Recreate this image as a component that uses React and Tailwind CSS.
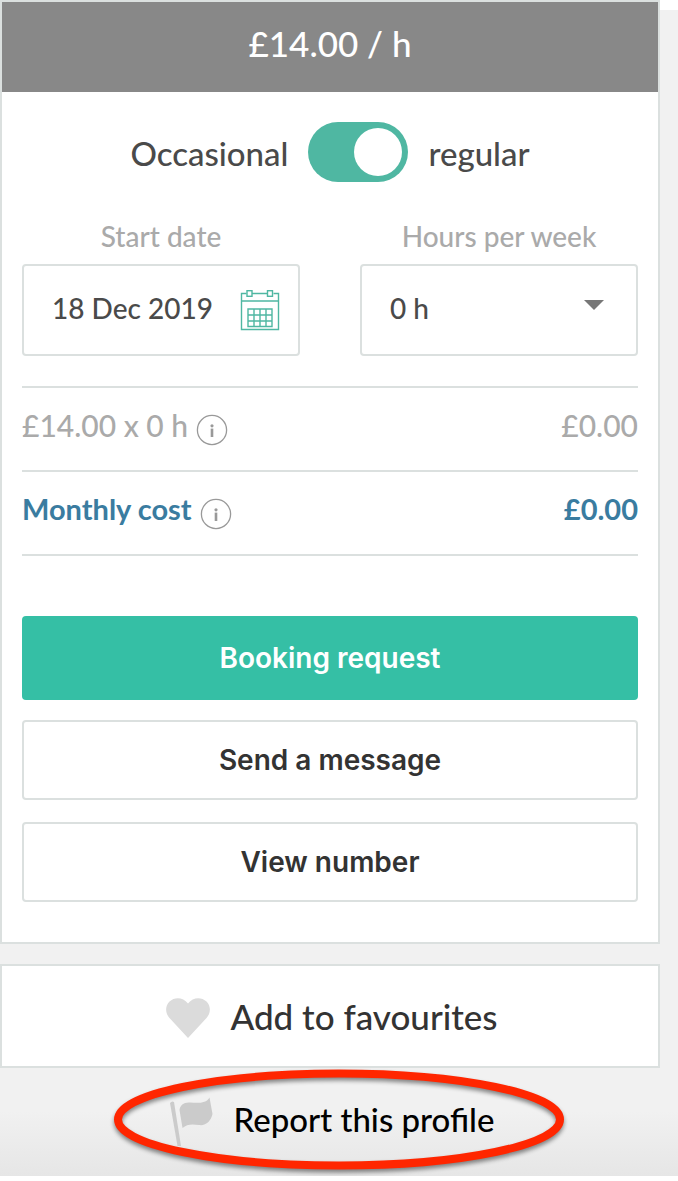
import React, { useState } from 'react';

const InfoIcon = () => (
    <svg viewBox="0 0 32 32" className="w-8 h-8" fill="none" aria-hidden="true">
        <circle cx="16" cy="16" r="14.6" stroke="#999999" strokeWidth="1.3" />
        <circle cx="16" cy="11.8" r="1.6" fill="#999999" />
        <rect x="14.7" y="14.6" width="2.6" height="8.4" fill="#999999" />
    </svg>
);

const CalendarIcon = () => (
    <svg viewBox="0 0 40 42" className="w-10 h-[42px]" fill="none" stroke="#4fb7a2" strokeWidth="1.4" aria-hidden="true">
        <path d="M6.5 4.5H1.5V40.5H38.5V4.5H33.5M12 4.5H27.5M1.5 12H38.5" />
        <rect x="7" y="1.7" width="5" height="5.6" />
        <rect x="27.5" y="1.7" width="5" height="5.6" />
        <path d="M8 20H32V37.5H8ZM8 26H32M8 32H32M14 20V37.5M20 20V37.5M26 20V37.5" />
    </svg>
);

const HeartIcon = () => (
    <svg viewBox="0 0 44 40" className="w-11 h-10" aria-hidden="true">
        <path d="M22 40L3.500 20C-1 15-1 8 3.500 3.500C8.500-1.200 17-1.200 22 5.500C27-1.200 35.500-1.200 40.500 3.500C45 8 45 15 40.500 20Z" fill="#dbdbdb" />
    </svg>
);

const FlagIcon = () => (
    <svg viewBox="0 0 44 50" className="w-11 h-[50px]" fill="#cbcbcb" aria-hidden="true">
        <path d="M0 6Q2 3.500 4 5L11 49H7.500Z" />
        <path d="M9.500 13C10 8 14 5 20 5.500C27 6 36 7 39.500 0.500L42.500 17C41 24 36 29 29 28C22 27 17 27 12.500 31Z" />
    </svg>
);

const CostRow = ({ label, value, className }) => (
    <div className={`flex items-center justify-between h-[84px] border-b-2 border-[#dbe0df] ${className}`}>
        <div className="flex items-center gap-2">
            <span className="pb-2">{label}</span>
            <button type="button" aria-label="More information" className="pt-0.5">
                <InfoIcon />
            </button>
        </div>
        <span className="pb-2">{value}</span>
    </div>
);

const App = () => {
    const [regular, setRegular] = useState(true);
    const [startDate, setStartDate] = useState('18 Dec 2019');
    const [hours, setHours] = useState('0');

    return (
        <div className="bg-[#f1f1f1] font-['Lato','Liberation_Sans',sans-serif] font-medium text-[#4a4a4a]">
            <div className="bg-linear-to-b from-white from-[10px] to-[#f1f1f1] to-[10px] pr-[18px]">
                <section className="bg-white border-2 border-[#dbe0df]">
                    <h1 className="flex items-center justify-center h-[90px] pb-2 bg-[#888888] text-white text-[35px] font-medium">£14.00 / h</h1>

                    <form className="px-5 pt-[30px] pb-10" onSubmit={(e) => e.preventDefault()}>
                        <div className="flex items-center justify-center gap-5 h-[60px] text-[33px]">
                            <label htmlFor="regular" className="pt-1">Occasional</label>
                            <input
                                id="regular" type="checkbox" role="switch" checked={regular} onChange={(e) => setRegular(e.target.checked)}
                                className="appearance-none w-[100px] h-[60px] p-1.5 rounded-full bg-gray-300 checked:bg-[#4fb7a2] before:block before:w-12 before:h-12 before:rounded-full before:bg-white checked:before:ml-auto"
                            />
                            <label htmlFor="regular" className="pt-1">regular</label>
                        </div>

                        <div className="grid grid-cols-2 gap-[60px] mt-9 text-[28px]">
                            <div>
                                <label htmlFor="start-date" className="block text-center leading-9 text-[#aaaaaa]">Start date</label>
                                <div className="flex items-center mt-2.5 h-[92px] pl-7 pr-[18px] border-2 border-[#dbe0df] rounded-sm">
                                    <input
                                        id="start-date" type="text" value={startDate} onChange={(e) => setStartDate(e.target.value)}
                                        className="flex-1 min-w-0 pb-1 outline-none"
                                    />
                                    <CalendarIcon />
                                </div>
                            </div>
                            <div>
                                <label htmlFor="hours" className="block text-center leading-9 text-[#aaaaaa]">Hours per week</label>
                                <div className="relative mt-2.5">
                                    <select
                                        id="hours" value={hours} onChange={(e) => setHours(e.target.value)}
                                        className="appearance-none block w-full h-[92px] pl-7 pr-12 pb-1 border-2 border-[#dbe0df] rounded-sm bg-white"
                                    >
                                        <option value="0">0 h</option>
                                        <option value="1">1 h</option>
                                        <option value="2">2 h</option>
                                    </select>
                                    <svg viewBox="0 0 20 10" className="absolute right-[34px] top-9 w-5 h-2.5 pointer-events-none" aria-hidden="true">
                                        <path d="M0 0H20L10 10Z" fill="#777777" />
                                    </svg>
                                </div>
                            </div>
                        </div>

                        <div className="mt-[30px] border-t-2 border-[#dbe0df]">
                            <CostRow label="£14.00 x 0 h" value="£0.00" className="text-[30px] text-[#aaaaaa]" />
                            <CostRow label="Monthly cost" value="£0.00" className="text-[29px] font-bold text-[#3a7ca0]" />
                        </div>

                        <div className="mt-[60px] font-['Inter','Liberation_Sans',sans-serif] text-[28px] font-semibold text-[#333333]">
                            <button type="submit" className="block w-full h-[84px] rounded-sm bg-[#35bfa5] text-white">Booking request</button>
                            <button type="button" className="block w-full h-20 mt-5 border-2 border-[#dbe0df] rounded-sm">Send a message</button>
                            <button type="button" className="block w-full h-20 mt-[22px] border-2 border-[#dbe0df] rounded-sm">View number</button>
                        </div>
                    </form>
                </section>

                <button type="button" className="flex items-center justify-center gap-5 w-full h-[104px] pt-1 pl-1 mt-5 border-2 border-[#dbe0df] bg-white text-[35px] text-[#333333]">
                    <HeartIcon />
                    <span className="pb-1">Add to favourites</span>
                </button>
            </div>

            <div className="pr-[18px] h-[108px] bg-linear-to-b from-[#f1f1f1] from-40% to-[#e6e6e6]">
                <a href="#report" className="relative flex items-center justify-center gap-5 h-[108px] pl-1 text-[33px] text-black">
                    <FlagIcon />
                    <span className="pb-1">Report this profile</span>
                    <svg viewBox="0 0 460 108" className="absolute inset-0 m-auto w-[460px] h-[108px] overflow-visible drop-shadow-[0_3px_2px_rgba(0,0,0,0.45)]" fill="none" aria-hidden="true">
                        <ellipse cx="239" cy="51.500" rx="221" ry="46" stroke="#ff2600" strokeWidth="8" />
                    </svg>
                </a>
            </div>
        </div>
    );
};

export default App;
